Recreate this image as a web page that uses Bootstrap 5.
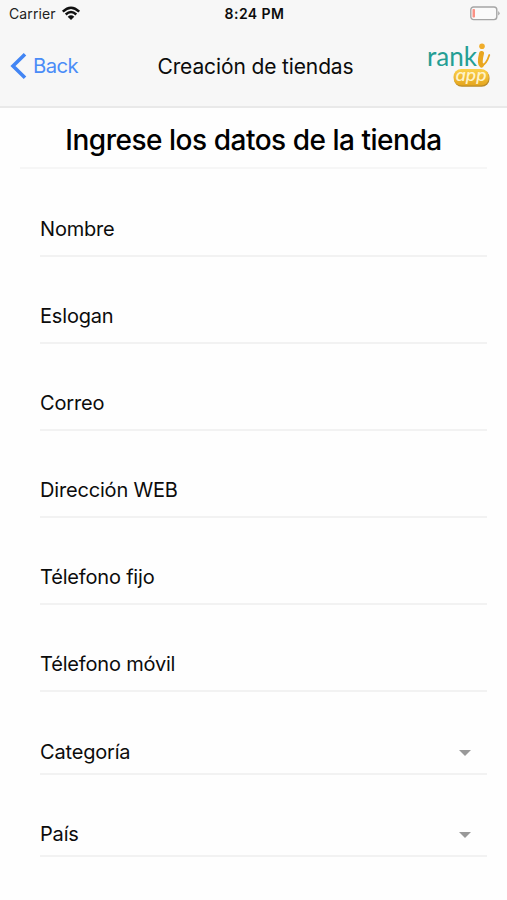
<!DOCTYPE html>
<html lang="es">
<head>
<meta charset="utf-8">
<meta name="viewport" content="width=device-width, initial-scale=1">
<title>Creación de tiendas</title>
<link rel="stylesheet" href="https://cdn.jsdelivr.net/npm/bootstrap@5.3.0/dist/css/bootstrap.min.css">
<style>
body { font-family: Inter, "Liberation Sans", sans-serif; color: #0c0c0c; background: #fefefe; }
.app-top { height: 108px; background: #f7f7f7; border-bottom: 2px solid #e9e9e9; }
.status-row { height: 28px; padding: 0 7px 0 9px; font-size: 13px; display: grid; grid-template-columns: 1fr auto 1fr; }
.carrier { font-size: 14px; letter-spacing: .1px; line-height: 18px; margin-right: 1px; color: #222; }
.clock { font-size: 14px; letter-spacing: .45px; padding-bottom: 1px; }
.title-row { height: 78px; padding: 0 16px 0 10px; display: grid; grid-template-columns: 1fr auto 1fr; }
.back-link { color: #4a8cf7; font-size: 20.3px; letter-spacing: -.6px; padding-bottom: 2px; }
.page-name { font-size: 21px; letter-spacing: -.13px; padding-left: 10px; }
.form-title { font-size: 28px; font-weight: 500; height: 61px; margin: 0 20px; line-height: 64px; border-bottom: 2px solid #f6f6f6; color: #000; letter-spacing: -.48px; }
.fields { padding-top: .6px; }
.field { height: 87.15px; margin: 0 20px 0 40px; padding-bottom: 11.1px; font-size: 20px; letter-spacing: -.18px; border-bottom: 2px solid #f2f2f2; line-height: 30px; }
.field-pick { height: 82.1px; padding-bottom: 5.3px; padding-right: 16px; }
.brand-word { font: 27px/1 Lato, sans-serif; fill: #249e94; }
.brand-app { font: italic 500 15px/1 Inter, sans-serif; fill: #fff3c8; }
</style>
<script src="https://cdn.jsdelivr.net/npm/bootstrap@5.3.0/dist/js/bootstrap.bundle.min.js"></script>
</head>
<body>
<header class="app-top">
  <div class="status-row align-items-center">
    <div class="d-flex align-items-center gap-1"><span class="carrier">Carrier</span>
      <svg width="20" height="16" viewBox="0 0 20 16" fill="none" stroke="#111" stroke-width="2.4"><path d="M1.8 5.6Q10-2.3 18.2 5.6M4.7 8.5Q10 3.6 15.3 8.5"/><path d="M10 13.9L6.7 10.7Q10 7.9 13.3 10.7Z" fill="#111" stroke="none"/></svg>
    </div>
    <span class="clock fw-semibold">8:24 PM</span>
    <svg class="ms-auto" width="30" height="17" viewBox="0 0 30 17"><rect x=".8" y="1" width="26" height="12.6" rx="2.8" fill="#fafafa" stroke="#a5a5a5" stroke-width="1.4"/><rect x="2.5" y="3" width="2.5" height="8.6" rx=".8" fill="#fa9185"/><path d="M28.2 5Q31 7.3 28.2 9.6Z" fill="#a5a5a5"/></svg>
  </div>
  <div class="title-row align-items-center">
    <a class="back-link d-flex align-items-center text-decoration-none" href="#">
      <svg width="23" height="28" viewBox="0 0 23 28" fill="none" stroke="#4285f4" stroke-width="3.6"><path d="M15 2.3L3 14L15 25.7"/></svg>Back</a>
    <span class="page-name">Creación de tiendas</span>
    <svg class="ms-auto overflow-visible" width="64" height="53" viewBox="0 0 64 53">
      <defs><linearGradient id="gold" x1="0" y1="0" x2="0" y2="1"><stop offset="0" stop-color="#fbd04a"/><stop offset="1" stop-color="#e5a61e"/></linearGradient></defs>
      <text class="brand-word" x="0" y="25" textLength="50" lengthAdjust="spacingAndGlyphs">rank</text>
      <g fill="none" stroke="#e9a61f" stroke-linecap="round"><path d="M54.5 12.5Q52 22.5 54.5 24" stroke-width="5"/><path d="M54.5 25Q59.5 23 62.3 14" stroke-width="1.8"/></g>
      <circle cx="55" cy="5.3" r="2.8" fill="#f0ad2a"/>
      <rect x="27" y="29" width="35.5" height="16.8" rx="7.8" fill="#b98b2a"/>
      <rect x="26.5" y="28" width="35.3" height="16.5" rx="7.8" fill="url(#gold)"/>
      <text class="brand-app" x="28.5" y="39.8" textLength="31" lengthAdjust="spacingAndGlyphs">app</text>
    </svg>
  </div>
</header>
<main>
  <h1 class="form-title text-center">Ingrese los datos de la tienda</h1>
  <form class="fields">
    <div class="field d-flex align-items-end">Nombre</div>
    <div class="field d-flex align-items-end">Eslogan</div>
    <div class="field d-flex align-items-end">Correo</div>
    <div class="field d-flex align-items-end">Dirección WEB</div>
    <div class="field d-flex align-items-end">Télefono fijo</div>
    <div class="field d-flex align-items-end">Télefono móvil</div>
    <div class="field field-pick d-flex align-items-end justify-content-between">Categoría<svg class="mb-2" width="12" height="12" viewBox="0 0 12 12"><path d="M0 3H12L6 9Z" fill="#999"/></svg></div>
    <div class="field field-pick d-flex align-items-end justify-content-between">País<svg class="mb-2" width="12" height="12" viewBox="0 0 12 12"><path d="M0 3H12L6 9Z" fill="#999"/></svg></div>
  </form>
</main>
</body>
</html>
